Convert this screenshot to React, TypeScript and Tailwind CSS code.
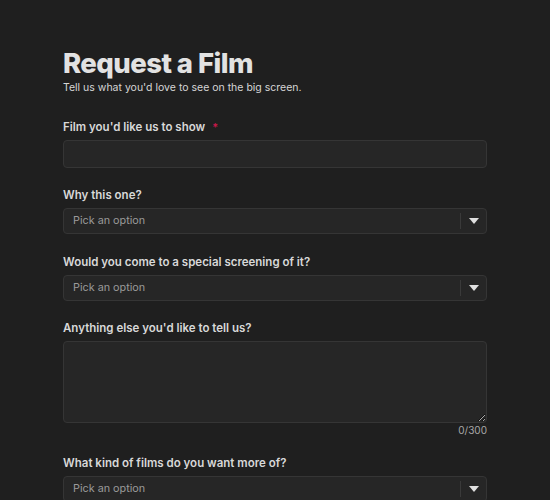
import React from "react";

function Caret() {
  return (
    <svg width="10" height="6" viewBox="0 0 10 6" className="block">
      <path d="M0 0 L10 0 L5 6 Z" fill="#e0e0e0" />
    </svg>
  );
}

function Select() {
  return (
    <div className="flex h-[26px] w-full items-stretch rounded-[4px] border border-[#353535] bg-[#262626]">
      <div className="flex flex-1 items-center pl-[9px] text-[10.8px] text-[#9a9a9a]">Pick an option</div>
      <div className="my-[4px] w-px bg-[#3a3a3a]" />
      <div className="flex w-[25px] items-center justify-center">
        <Caret />
      </div>
    </div>
  );
}

function Label({ children }: { children: React.ReactNode }) {
  return <div className="mb-[5px] text-[11.5px] font-semibold leading-[16px] text-[#d8d8d8]">{children}</div>;
}

export default function App() {
  return (
    <div
      className="min-h-[500px] w-[550px] overflow-hidden bg-[#1f1f1f] text-[#e6e6e6]"
      style={{ fontFamily: "Inter, 'Noto Sans', sans-serif" }}
    >
      <div className="mx-[63px] pt-[46px]">
        <h1 className="text-[27.5px] font-extrabold leading-[34px] tracking-[-0.02em] text-[#e2e2e2]">Request a Film</h1>
        <p className="mt-[1px] text-[10.5px] leading-[14px] text-[#d6d6d6]">Tell us what you'd love to see on the big screen.</p>

        <div className="mt-[24px]">
          <div className="mb-[5px] flex items-center text-[11.5px] font-semibold leading-[16px] text-[#d8d8d8]">
            Film you'd like us to show
            <span className="ml-[7px] text-[11px] leading-none text-[#c8184a]">*</span>
          </div>
          <div className="h-[28px] w-full rounded-[4px] border border-[#353535] bg-[#262626]" />
        </div>

        <div className="mt-[19px]">
          <Label>Why this one?</Label>
          <Select />
        </div>

        <div className="mt-[20px]">
          <Label>Would you come to a special screening of it?</Label>
          <Select />
        </div>

        <div className="mt-[19px]">
          <Label>Anything else you'd like to tell us?</Label>
          <textarea className="block h-[82px] w-full resize-y rounded-[4px] border border-[#353535] bg-[#262626] outline-none" />
          <div className="mt-[1px] text-right text-[10px] leading-[13px] text-[#a8a8a8]">0/300</div>
        </div>

        <div className="mt-[18px]">
          <Label>What kind of films do you want more of?</Label>
          <Select />
        </div>
      </div>
    </div>
  );
}
